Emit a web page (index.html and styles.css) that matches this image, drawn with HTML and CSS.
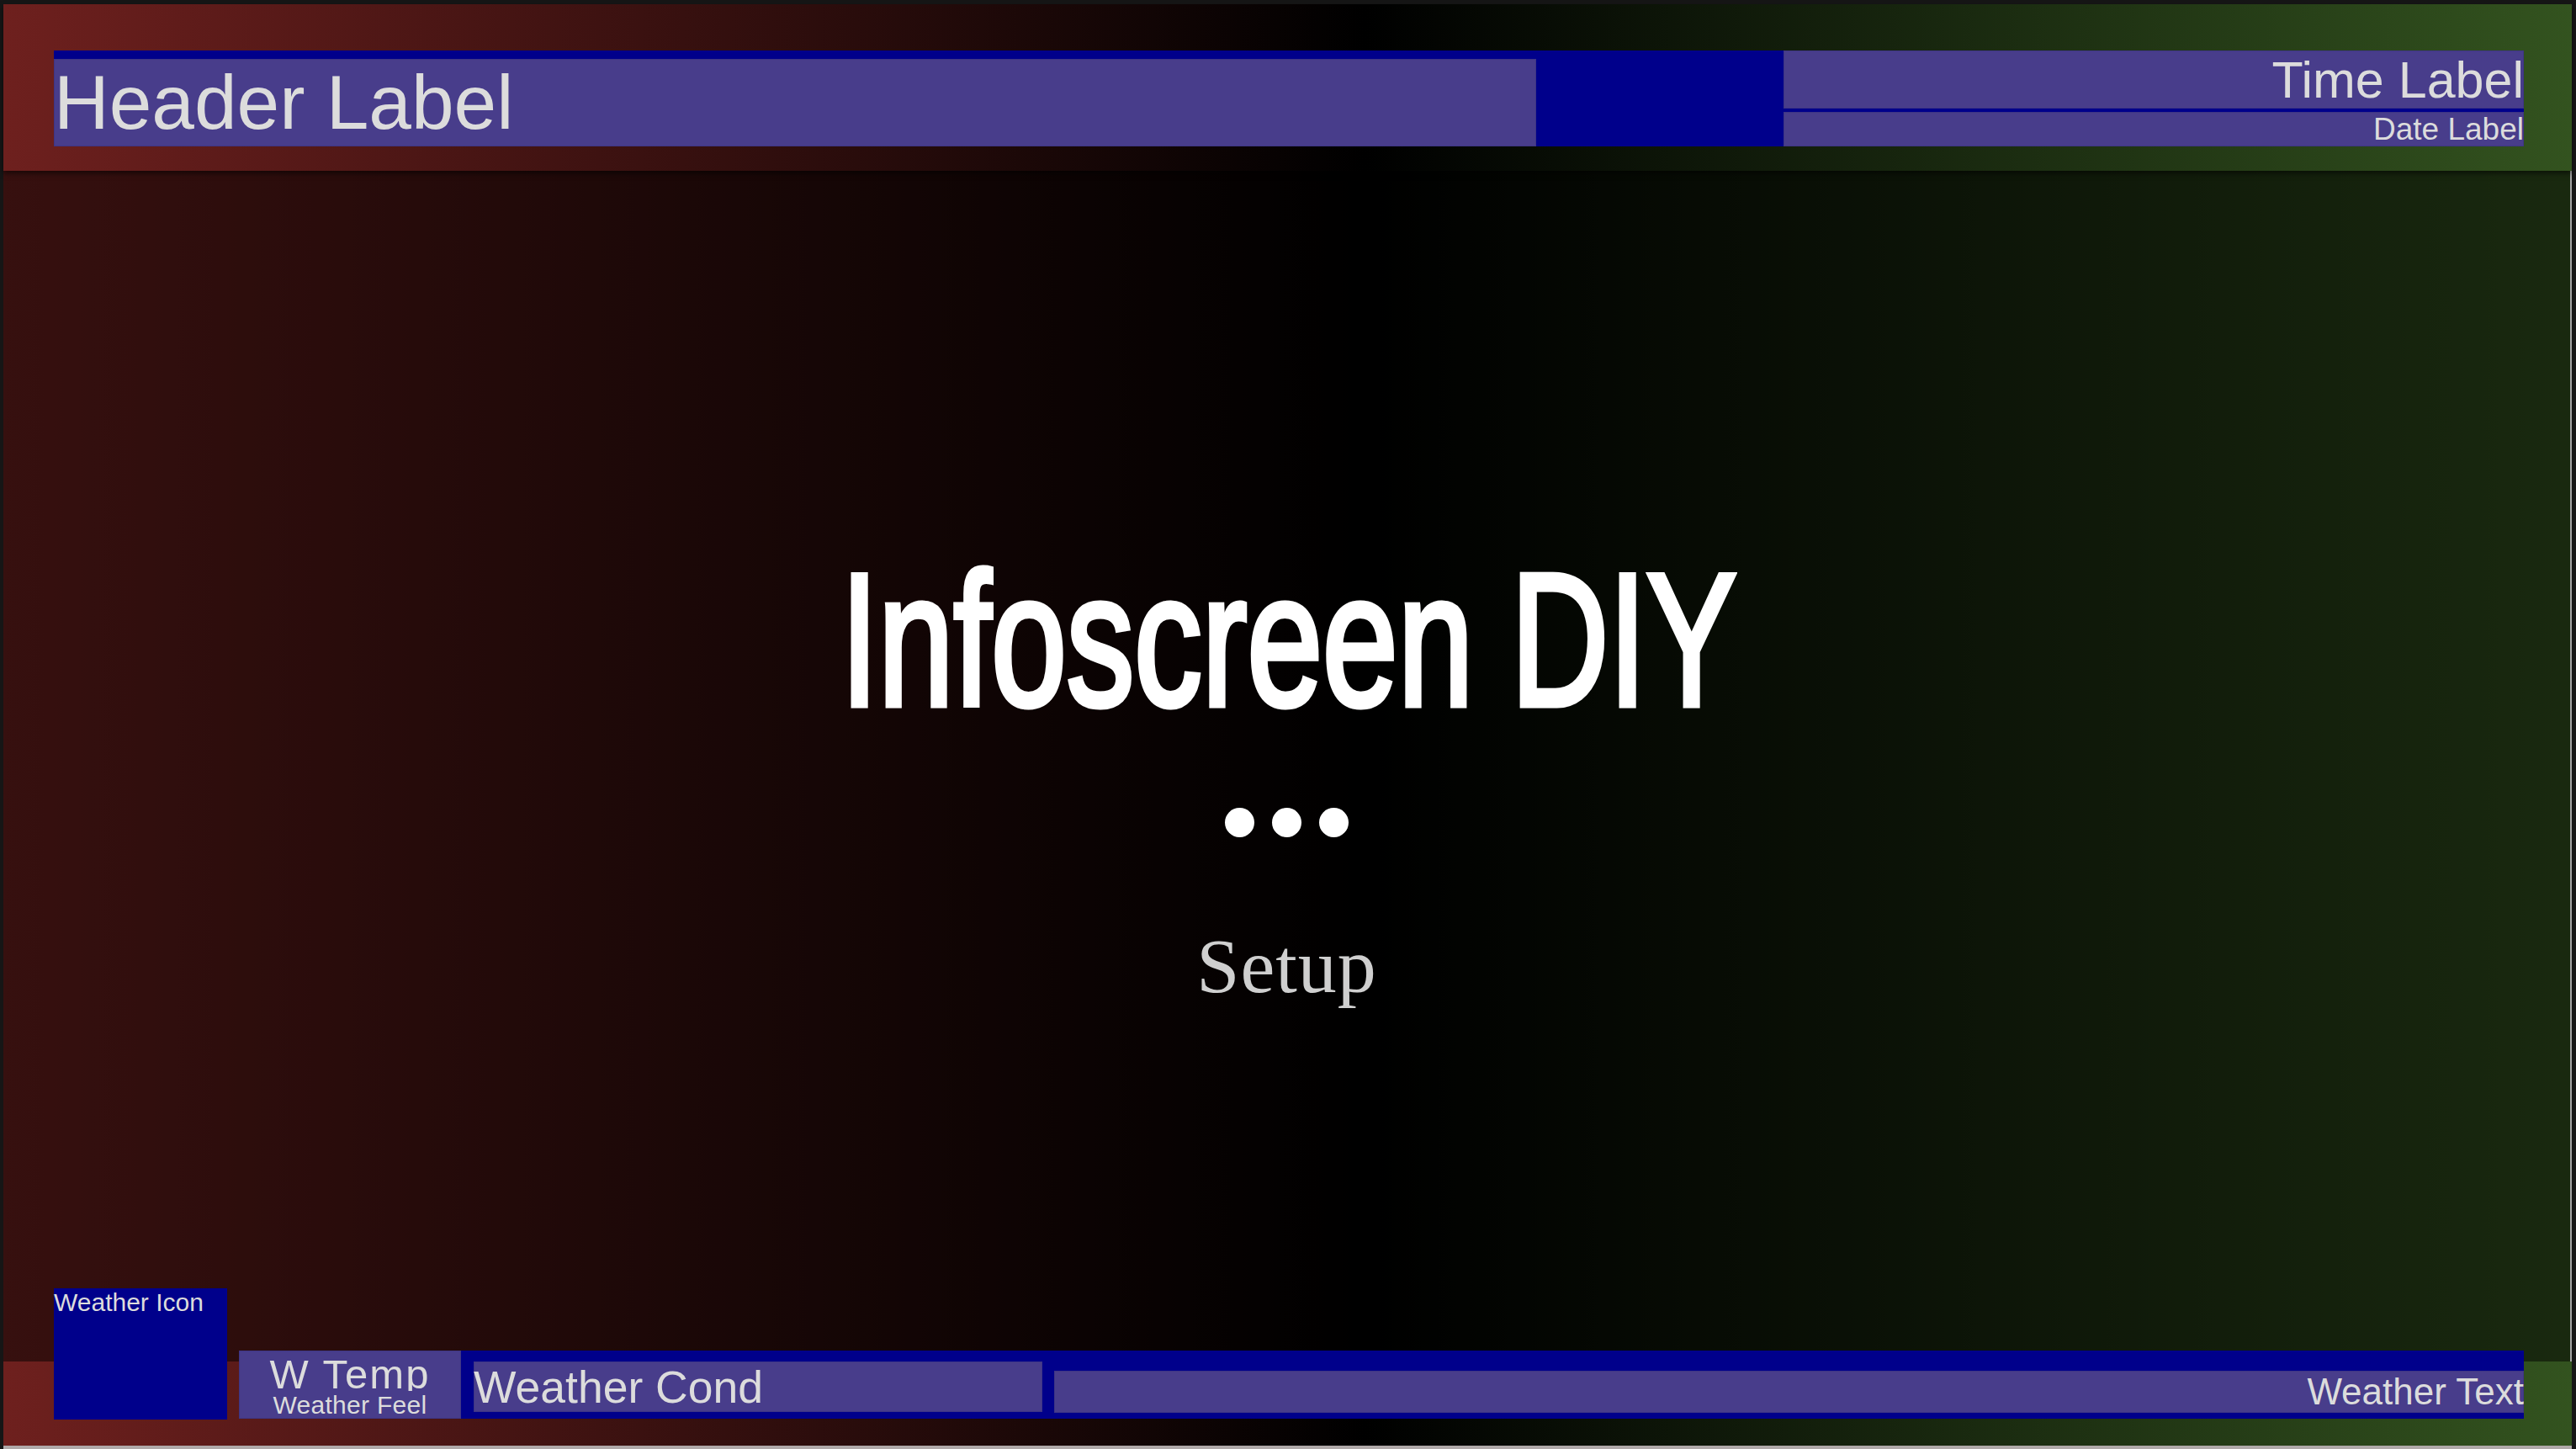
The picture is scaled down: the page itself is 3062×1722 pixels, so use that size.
FILE: index.html
```html
<!DOCTYPE html>
<html lang="en">
<head>
<meta charset="utf-8">
<title>Infoscreen DIY</title>
<link rel="stylesheet" href="styles.css">
</head>
<body>
<div class="screen">
  <header class="topbar">
    <div class="top-panel">
      <div class="header-label">Header Label</div>
      <div class="clock">
        <div class="time">Time Label</div>
        <div class="date">Date Label</div>
      </div>
    </div>
  </header>
  <main class="stage">
    <h1 class="title">Infoscreen DIY</h1>
    <div class="dots"><span></span><span></span><span></span></div>
    <div class="status">Setup</div>
  </main>
  <footer class="bottombar">
    <div class="bottom-row">
      <div class="wx-icon">Weather Icon</div>
      <div class="wx-temp">
        <div class="temp">W Temp</div>
        <div class="feel">Weather Feel</div>
      </div>
      <div class="wx-bar">
        <div class="cond">Weather Cond</div>
        <div class="wtext">Weather Text</div>
      </div>
    </div>
  </footer>
</div>
</body>
</html>
```

FILE: styles.css
```css
html, body {
  margin: 0;
}
body {
  width: 3062px;
  height: 1722px;
  box-sizing: border-box;
  padding: 5px 5px 0 4px;
  background: #161616;
  overflow: hidden;
}
.screen {
  height: 1713px;
  border-bottom: 4px solid #b0a9a9;
  background: linear-gradient(90deg, #6e201e 0%, #000 53%, #33531f 100%);
  display: flex;
  flex-direction: column;
  font-family: "Liberation Sans", Arial, sans-serif;
  color: #dcdcdc;
}

/* header */
.topbar {
  flex: none;
  height: 198px;
  box-sizing: border-box;
  padding: 55px 57px 0 60px;
  position: relative;
  z-index: 1;
  box-shadow: 0 3px 6px rgba(0, 0, 0, 0.55);
}
.top-panel {
  display: flex;
  height: 114px;
  background: #00008b;
}
.header-label {
  width: 1762px;
  height: 104px;
  margin-top: 10px;
  background: #483d8b;
  box-shadow: inset 0 0 0 1px #3e3585;
  font-size: 91px;
  line-height: normal;
  white-space: nowrap;
  overflow: hidden;
}
.clock {
  margin-left: auto;
  width: 880px;
  display: flex;
  flex-direction: column;
  gap: 4px;
}
.time, .date {
  background: #483d8b;
  box-shadow: inset 0 0 0 1px #3e3585;
  text-align: right;
  white-space: nowrap;
  overflow: hidden;
  line-height: normal;
}
.time {
  height: 69px;
  font-size: 61px;
}
.date {
  height: 41px;
  font-size: 37px;
}

/* centre */
.stage {
  flex: 1;
  min-height: 0;
  box-sizing: border-box;
  padding-top: 20px;
  background: rgba(0, 0, 0, 0.5);
  border-right: 2px solid #a3a3a3;
  display: flex;
  flex-direction: column;
  align-items: center;
  justify-content: center;
}
.title {
  margin: 0 0 0 4px;
  font-family: "Liberation Sans", Arial, sans-serif;
  font-weight: 400;
  font-size: 224px;
  line-height: 220px;
  height: 220px;
  color: #fff;
  -webkit-text-stroke: 7px #fff;
  transform: scaleX(0.719);
  white-space: nowrap;
}
.dots {
  display: flex;
  gap: 21px;
  margin-top: 90px;
}
.dots span {
  width: 35px;
  height: 35px;
  border-radius: 50%;
  background: #fff;
}
.status {
  margin-top: 109px;
  font-family: "Liberation Serif", "Times New Roman", serif;
  font-size: 92px;
  line-height: 88px;
  height: 88px;
  letter-spacing: 1px;
  color: #cfcfcf;
}

/* footer */
.bottombar {
  flex: none;
  height: 100px;
  box-sizing: border-box;
  padding: 0 57px 0 60px;
}
.bottom-row {
  display: flex;
  align-items: flex-end;
  margin-top: -87px;
}
.wx-icon {
  flex: none;
  width: 206px;
  height: 156px;
  background: #00008b;
  font-size: 30px;
  line-height: normal;
  white-space: nowrap;
}
.wx-temp {
  flex: none;
  width: 264px;
  height: 81px;
  margin: 0 0 1px 14px;
  background: #483d8b;
  box-shadow: inset 0 0 0 1px #3e3585;
  text-align: center;
  display: flex;
  flex-direction: column;
}
.temp {
  height: 48px;
  overflow: hidden;
  font-size: 49px;
  letter-spacing: 2px;
  line-height: normal;
  white-space: nowrap;
}
.feel {
  font-size: 30px;
  letter-spacing: 0.3px;
  line-height: 33px;
  white-space: nowrap;
}
.wx-bar {
  flex: 1;
  height: 81px;
  margin-bottom: 1px;
  box-sizing: border-box;
  padding-left: 15px;
  background: #00008b;
  display: flex;
  align-items: flex-start;
}
.cond {
  flex: none;
  width: 676px;
  height: 60px;
  margin-top: 13px;
  background: #483d8b;
  box-shadow: inset 0 0 0 1px #3e3585;
  font-size: 53.5px;
  line-height: normal;
  white-space: nowrap;
  overflow: hidden;
}
.wtext {
  flex: 1;
  height: 50px;
  margin: 24px 0 0 14px;
  background: #483d8b;
  box-shadow: inset 0 0 0 1px #3e3585;
  font-size: 44px;
  line-height: normal;
  text-align: right;
  white-space: nowrap;
  overflow: hidden;
}
```
